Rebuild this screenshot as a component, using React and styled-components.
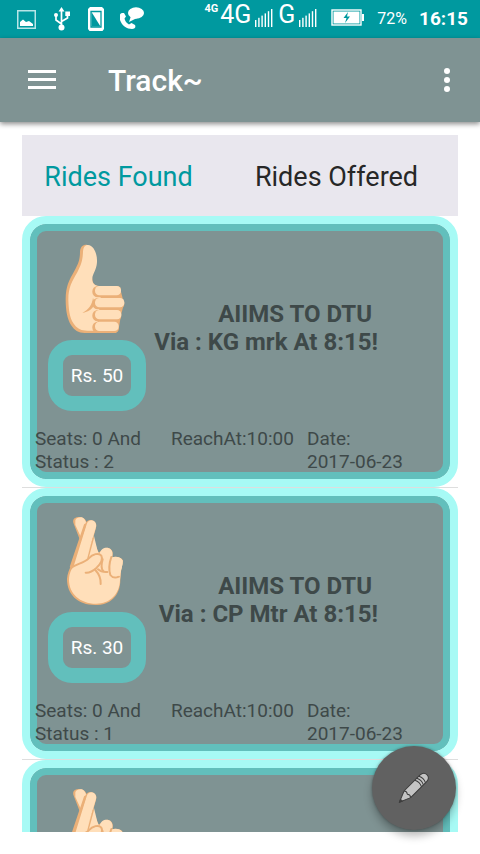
import React, { useState } from "react";
import styled, { createGlobalStyle } from "styled-components";

const color = {
  status: "#00999f",
  slate: "#7f9393",
  aqua: "#a7faf5",
  teal: "#62bfbc",
  tabs: "#e9e7ee",
  ink: "#3e4949",
  skin: "#ffdfba",
  skinEdge: "#ebb078",
};

const GlobalStyle = createGlobalStyle`
  * { box-sizing: border-box; }
  body { margin: 0; background: #fff; font-family: Roboto, "Noto Sans", sans-serif; }
  button { font: inherit; border: 0; padding: 0; background: none; cursor: pointer; }
`;

const Screen = styled.div`
  display: flex;
  flex-direction: column;
  height: 100vh;
  overflow: hidden;
`;

const StatusBar = styled.div`
  display: flex;
  flex: none;
  align-items: center;
  justify-content: space-between;
  height: 38px;
  padding: 0 12px 0 17px;
  background: ${color.status};
  color: #fff;
`;

const StatusIcons = styled.div`
  display: flex;
  align-items: center;
  gap: 16px;
`;

const StatusInfo = styled.div`
  display: flex;
  align-items: flex-start;
  height: 38px;
`;

const Network = styled.span`
  font-size: ${(p) => (p.$small ? "11px" : "25px")};
  font-weight: ${(p) => (p.$small ? 700 : 400)};
  line-height: ${(p) => (p.$small ? "18px" : "30px")};
  margin-right: 2px;
`;

const Signal = styled.svg`
  margin: 9px 5px 0 2px;
`;

const BatteryIcon = styled.svg`
  margin: 9px 0 0 9px;
`;

const Percent = styled.span`
  margin-left: 13px;
  font-size: 16px;
  line-height: 38px;
`;

const Clock = styled.time`
  margin-left: 12px;
  font-size: 19px;
  line-height: 38px;
  font-weight: 700;
`;

const AppBar = styled.header`
  display: flex;
  flex: none;
  align-items: center;
  height: 84px;
  padding: 0 24px;
  background: ${color.slate};
  box-shadow: 0 2px 5px rgba(0, 0, 0, 0.45);
  color: #fff;
`;

const IconButton = styled.button`
  display: flex;
  padding: 4px;
  color: #fff;
`;

const Title = styled.h1`
  flex: 1;
  margin: 0 0 0 48px;
  font-size: 30px;
  font-weight: 500;
`;

const Main = styled.main`
  display: flex;
  flex: 1;
  flex-direction: column;
  min-height: 0;
  margin: 13px 22px 22px;
`;

const Tabs = styled.div`
  display: flex;
  flex: none;
  height: 81px;
  background: ${color.tabs};
`;

const Tab = styled.button`
  flex: 1;
  padding-right: 25px;
  padding-top: 2px;
  font-size: 27px;
  color: ${(p) => (p.$active ? color.status : "#272727")};
`;

const List = styled.ul`
  flex: 1;
  min-height: 0;
  margin: 0;
  padding: 0;
  overflow: hidden;
  list-style: none;
`;

const Item = styled.li`
  & + & { border-top: 1px solid #dedede; }
`;

const Card = styled.article`
  padding: 20px 7px 6px 5px;
  border: 8px solid ${color.aqua};
  border-radius: 24px;
  background: ${color.slate} padding-box;
  box-shadow: inset 0 0 0 7px ${color.teal};
  color: ${color.ink};
`;

const Summary = styled.div`
  display: flex;
  padding: 0 65px 0 13px;
`;

const Offer = styled.div`
  flex: none;
  width: 98px;
`;

const Hand = styled.svg`
  display: block;
  width: 98px;
  height: 90px;
`;

const Fare = styled.div`
  margin-top: 6px;
  padding-top: 1px;
  border: 15px solid ${color.teal};
  border-radius: 24px;
  color: #fff;
  font-size: 19px;
  line-height: 40px;
  text-align: center;
  white-space: nowrap;
`;

const Route = styled.h2`
  flex: 1;
  margin: 56px 0 0;
  font-size: 24px;
  line-height: 28px;
  font-weight: 700;
  text-align: right;
  white-space: nowrap;
`;

const Place = styled.span`
  display: block;
  padding-right: ${(p) => (p.$inset ? "6px" : "0")};
`;

const Details = styled.div`
  display: grid;
  grid-template-columns: repeat(3, 1fr);
  margin-top: 16px;
  font-size: 19px;
  line-height: 23px;
`;

const Detail = styled.div`
  min-width: 0;
`;

const Day = styled.time`
  white-space: nowrap;
`;

const Fab = styled.button`
  position: fixed;
  right: 24px;
  bottom: 24px;
  width: 84px;
  height: 84px;
  border-radius: 50%;
  background: #616161;
  box-shadow: 0 6px 8px rgba(0, 0, 0, 0.28), 0 0 3px rgba(0, 0, 0, 0.3);
`;

const FabIcon = styled.svg`
  display: block;
  width: 84px;
  height: 84px;
`;

function ThumbUp() {
  return (
    <Hand viewBox="84 57 294 270" aria-label="Thumbs up" role="img">
      <path fill={color.skinEdge} d="M201 59C188 58 181 66 180 79C180 101 177 113 163 138C147 166 137 185 137 222C137 258 142 282 153 300C163 316 175 324 194 324H284C293 324 297 317 297 306L303 270L312 236L303 200C304 188 299 183 291 183H238C225 183 217 174 217 163Z" />
      <path fill={color.skin} d="M204 60C194 60 190 67 189 80C188 105 185 116 172 142C156 169 145 188 145 224C146 265 152 285 164 300C174 312 184 317 202 317H230L246 184H239C223 183 215 173 217 160C218 148 226 139 230 120C235 94 223 60 204 60Z" />
      {[
        [217, 183, 303, 211],
        [217, 219, 313, 247],
        [217, 255, 304, 283],
        [217, 290, 296, 318],
      ].map(([x, y, end, bottom]) => (
        <g key={y}>
          <rect x={x} y={y} width={end - x} height={bottom - y + 6} rx="16" fill={color.skinEdge} />
          <rect x={x + 8} y={y} width={end - x - 8} height={bottom - y} rx="13" fill={color.skin} />
        </g>
      ))}
      <path fill={color.skinEdge} d="M187 263C207 253 217 237 219 218L225 236C218 252 205 261 187 263Z" />
    </Hand>
  );
}

function CrossedFingers() {
  return (
    <Hand viewBox="24 48 294 270" aria-label="Crossed fingers" role="img">
      <path fill={color.skinEdge} d="M100 68C97 56 107 51 118 51C128 51 134 55 137 61L162 122L178 164L145 190H108L119 118Z" />
      <path fill={color.skin} d="M106 61C109 52 119 51 125 52C132 54 137 62 140 71L172 156L150 180L123 112L106 75Z" />
      <path fill={color.skinEdge} d="M135 73C139 61 151 58 160 62C168 66 171 74 168 83L143 175L184 153C190 144 202 141 211 146C218 151 220 159 217 172C228 168 244 171 249 181C249 190 244 203 243 216L241 239C241 288 210 315 166 315C112 315 81 282 81 237C82 221 88 209 91 202Z" />
      <path fill={color.skin} d="M140 73C143 61 154 58 162 63C169 68 170 76 167 85L144 161L156 124L162 108L172 149L178 163C181 148 193 140 205 144C216 147 220 158 216 172C226 168 243 171 248 182C249 194 243 206 242 219L240 240C238 284 209 311 169 311C118 311 87 279 87 239C88 216 96 207 101 199Z" />
      <path fill="none" stroke={color.skinEdge} strokeWidth="7" strokeLinecap="round" d="M135 75L93 200" />
      <g fill="none" stroke={color.skinEdge} strokeWidth="6" strokeLinecap="round" strokeLinejoin="round">
        <path d="M160 114L144 174" strokeWidth="4" />
        <path d="M95 202C114 190 133 189 146 175C158 162 176 157 184 167C191 180 181 192 170 203C158 214 148 219 137 218" />
        <path d="M166 210C179 224 183 237 182 252M174 208C183 216 192 217 202 216" />
        <path d="M188 178C184 192 181 205 190 213M214 171C207 191 207 212 211 225C217 233 228 234 237 230" />
      </g>
      <path fill={color.skin} d="M219 180C222 170 240 168 248 182C248 199 242 211 239 224C227 234 214 227 214 216Z" />
    </Hand>
  );
}

function SignalBars() {
  return (
    <Signal width="18" height="18" viewBox="0 0 18 18" fill="#fff" aria-hidden="true">
      {[0, 1, 2, 3, 4, 5].map((i) => (
        <rect key={i} x={i * 3.2} y={11 - i * 2.2} width="1.4" height={7 + i * 2.2} />
      ))}
    </Signal>
  );
}

function NotificationIcons() {
  return (
    <StatusIcons aria-hidden="true">
      <svg width="19" height="19" viewBox="0 0 19 19">
        <rect x=".75" y=".75" width="17.5" height="17.5" fill="none" stroke="#b8e5e7" strokeWidth="1.5" />
        <path fill="#fff" d="M3 16V12L6 9.500L9 12L12 11L16 14V16Z" />
      </svg>
      <svg width="18" height="24" viewBox="0 0 18 24" fill="none" stroke="#fff" strokeWidth="1.7">
        <path d="M9.500 20V3M9.500 17L4 13V9M9.500 14.500L15.500 11V7" />
        <path fill="#fff" stroke="none" d="M9.500 0L12.500 4.500H6.500ZM13.300 4.500H18V9H13.300Z" />
        <circle cx="4" cy="8" r="2" fill="#fff" stroke="none" />
        <circle cx="9.500" cy="20.500" r="3" fill="#fff" stroke="none" />
      </svg>
      <svg width="18" height="24" viewBox="0 0 18 24">
        <path fill="#fff" d="M4 0H16L18 2V22L16.500 24H3.500L2 22V2Z" />
        <path fill="none" stroke={color.status} strokeWidth="1.3" d="M5 4.500H15V20H5Z" />
        <path fill={color.status} d="M5.500 5V19.500H14.500Z" />
      </svg>
      <svg width="26" height="24" viewBox="0 0 26 24" fill="#fff">
        <path d="M2 6C-1 7 -1 10 0 13C2 19 7 22 12 22C15 22 16 20 15 18L11.500 16L9 17.500C6.500 16 5 14 4.500 11.500L6 9.500L4 6Z" />
        <ellipse cx="16" cy="6" rx="8" ry="5.800" />
        <path d="M11 9L9 15L17 11Z" />
      </svg>
    </StatusIcons>
  );
}

function Battery() {
  return (
    <BatteryIcon width="33" height="17" viewBox="0 0 33 17" role="img" aria-label="Charging">
      <rect x="1" y="1" width="29" height="15" fill="none" stroke="#fff" strokeWidth="1.4" />
      <rect x="2.500" y="2.500" width="26" height="12" fill="#fff" />
      <rect x="31" y="5" width="2" height="7" fill="#fff" />
      <path fill={color.status} d="M17 3L12.500 9H15.500L14 14L19 7.500H16Z" />
    </BatteryIcon>
  );
}

function PencilIcon() {
  return (
    <FabIcon viewBox="96 48 252 252" aria-hidden="true">
      <g transform="translate(178 217) rotate(-45)" stroke="#3d3d3d" strokeWidth="3" strokeLinejoin="round">
        <path fill="#c4c4c4" d="M0 0L34 -14H101Q117 -14 117 0Q117 14 101 14H34Z" />
        <path fill="none" d="M34 -14Q40 -7 34 0Q40 7 34 14M80 -14Q87 0 80 14M88 -14Q95 0 88 14M97 -14Q104 0 97 14" />
        <path fill="#3d3d3d" d="M0 0L9 -4V4Z" />
      </g>
    </FabIcon>
  );
}

const rides = [
  { id: 1, Icon: ThumbUp, fare: 50, via: "KG mrk", status: 2 },
  { id: 2, Icon: CrossedFingers, fare: 30, via: "CP Mtr", status: 1 },
  { id: 3, Icon: CrossedFingers, fare: 30, via: "CP Mtr", status: 1 },
];

function Ride({ Icon, fare, via, status }) {
  return (
    <Item>
      <Card>
        <Summary>
          <Offer>
            <Icon />
            <Fare>{`Rs. ${fare}`}</Fare>
          </Offer>
          <Route>
            <Place $inset>AIIMS TO DTU</Place>
            <Place>{`Via : ${via} At 8:15!`}</Place>
          </Route>
        </Summary>
        <Details>
          <Detail>{`Seats: 0 And Status : ${status}`}</Detail>
          <Detail>ReachAt:10:00</Detail>
          <Detail>Date: <Day>2017-06-23</Day></Detail>
        </Details>
      </Card>
    </Item>
  );
}

export default function App() {
  const [tab, setTab] = useState("Rides Found");
  return (
    <Screen>
      <GlobalStyle />
      <StatusBar>
        <NotificationIcons />
        <StatusInfo>
          <Network $small>4G</Network>
          <Network>4G</Network>
          <SignalBars />
          <Network>G</Network>
          <SignalBars />
          <Battery />
          <Percent>72%</Percent>
          <Clock>16:15</Clock>
        </StatusInfo>
      </StatusBar>
      <AppBar>
        <IconButton aria-label="Open menu">
          <svg width="28" height="22" viewBox="0 0 28 22" fill="currentColor">
            <path d="M0 1H28V4H0ZM0 9H28V12H0ZM0 17H28V20H0Z" />
          </svg>
        </IconButton>
        <Title>Track~</Title>
        <IconButton aria-label="More options">
          <svg width="10" height="26" viewBox="0 0 10 26" fill="currentColor">
            <circle cx="5" cy="4" r="3" />
            <circle cx="5" cy="13" r="3" />
            <circle cx="5" cy="22" r="3" />
          </svg>
        </IconButton>
      </AppBar>
      <Main>
        <Tabs role="tablist">
          {["Rides Found", "Rides Offered"].map((name) => (
            <Tab key={name} role="tab" aria-selected={tab === name} $active={tab === name} onClick={() => setTab(name)}>
              {name}
            </Tab>
          ))}
        </Tabs>
        <List>
          {rides.map((ride) => (
            <Ride key={ride.id} {...ride} />
          ))}
        </List>
      </Main>
      <Fab aria-label="Edit">
        <PencilIcon />
      </Fab>
    </Screen>
  );
}
